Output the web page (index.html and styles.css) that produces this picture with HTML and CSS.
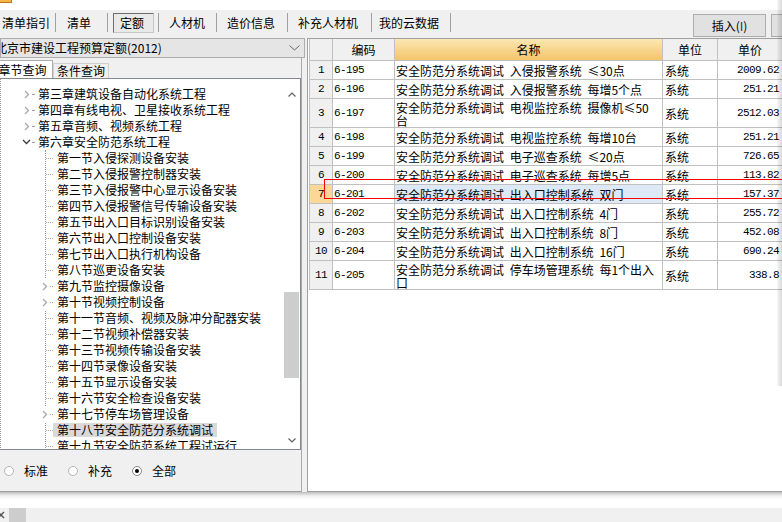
FILE: index.html
```html
<!DOCTYPE html>
<html lang="zh-CN">
<head>
<meta charset="utf-8">
<title>定额</title>
<link rel="stylesheet" href="styles.css">
</head>
<body>
<div class="app">
  <div class="titlestrip"><span class="app-icon"></span></div>

  <div class="toolbar">
    <nav class="tabs">
      <span class="tab tab-guide">清单指引</span>
      <span class="tab tab-list">清单</span>
      <span class="tab tab-quota"><span class="pressed">定额</span></span>
      <span class="tab tab-mat">人材机</span>
      <span class="tab tab-price">造价信息</span>
      <span class="tab tab-extra">补充人材机</span>
      <span class="tab tab-cloud">我的云数据</span>
    </nav>
    <div class="actions">
      <button class="btn">插入(<span class="key">I</span>)</button>
      <button class="btn btn-cut" aria-label="替换"></button>
    </div>
  </div>

  <div class="main">
    <aside class="left">
      <div class="combo">
        <span class="combo-text">北京市建设工程预算定额(2012)</span>
        <svg class="combo-arrow" width="11" height="6" viewBox="0 0 11 6"><polyline points="0.5,0.5 5.5,5 10.5,0.5" fill="none" stroke="#6a6a6a" stroke-width="1"/></svg>
      </div>
      <div class="qtabs">
        <span class="qtab active">章节查询</span>
        <span class="qtab">条件查询</span>
      </div>
      <div class="treebox">
        <div class="tree">
          <div class="node chapter"><span class="exp"><svg width="6" height="9" viewBox="0 0 6 9"><polyline points="1,1 4.5,4.5 1,8" fill="none" stroke="#a8a8a8" stroke-width="1.3"/></svg></span><span class="stub"></span><span class="label">第三章建筑设备自动化系统工程</span></div>
          <div class="node chapter"><span class="exp"><svg width="6" height="9" viewBox="0 0 6 9"><polyline points="1,1 4.5,4.5 1,8" fill="none" stroke="#a8a8a8" stroke-width="1.3"/></svg></span><span class="stub"></span><span class="label">第四章有线电视、卫星接收系统工程</span></div>
          <div class="node chapter"><span class="exp"><svg width="6" height="9" viewBox="0 0 6 9"><polyline points="1,1 4.5,4.5 1,8" fill="none" stroke="#a8a8a8" stroke-width="1.3"/></svg></span><span class="stub"></span><span class="label">第五章音频、视频系统工程</span></div>
          <div class="node chapter"><span class="exp"><svg width="9" height="6" viewBox="0 0 9 6"><polyline points="1,1 4.5,4.5 8,1" fill="none" stroke="#3c3c3c" stroke-width="1.3"/></svg></span><span class="stub"></span><span class="label">第六章安全防范系统工程</span></div>
          <div class="children">
            <div class="node section"><span class="stub"></span><span class="label">第一节入侵探测设备安装</span></div>
            <div class="node section"><span class="stub"></span><span class="label">第二节入侵报警控制器安装</span></div>
            <div class="node section"><span class="stub"></span><span class="label">第三节入侵报警中心显示设备安装</span></div>
            <div class="node section"><span class="stub"></span><span class="label">第四节入侵报警信号传输设备安装</span></div>
            <div class="node section"><span class="stub"></span><span class="label">第五节出入口目标识别设备安装</span></div>
            <div class="node section"><span class="stub"></span><span class="label">第六节出入口控制设备安装</span></div>
            <div class="node section"><span class="stub"></span><span class="label">第七节出入口执行机构设备</span></div>
            <div class="node section"><span class="stub"></span><span class="label">第八节巡更设备安装</span></div>
            <div class="node section"><span class="exp"><svg width="6" height="9" viewBox="0 0 6 9"><polyline points="1,1 4.5,4.5 1,8" fill="none" stroke="#a8a8a8" stroke-width="1.3"/></svg></span><span class="stub"></span><span class="label">第九节监控摄像设备</span></div>
            <div class="node section"><span class="exp"><svg width="6" height="9" viewBox="0 0 6 9"><polyline points="1,1 4.5,4.5 1,8" fill="none" stroke="#a8a8a8" stroke-width="1.3"/></svg></span><span class="stub"></span><span class="label">第十节视频控制设备</span></div>
            <div class="node section"><span class="stub"></span><span class="label">第十一节音频、视频及脉冲分配器安装</span></div>
            <div class="node section"><span class="stub"></span><span class="label">第十二节视频补偿器安装</span></div>
            <div class="node section"><span class="stub"></span><span class="label">第十三节视频传输设备安装</span></div>
            <div class="node section"><span class="stub"></span><span class="label">第十四节录像设备安装</span></div>
            <div class="node section"><span class="stub"></span><span class="label">第十五节显示设备安装</span></div>
            <div class="node section"><span class="stub"></span><span class="label">第十六节安全检查设备安装</span></div>
            <div class="node section"><span class="exp"><svg width="6" height="9" viewBox="0 0 6 9"><polyline points="1,1 4.5,4.5 1,8" fill="none" stroke="#a8a8a8" stroke-width="1.3"/></svg></span><span class="stub"></span><span class="label">第十七节停车场管理设备</span></div>
            <div class="node section selected"><span class="stub"></span><span class="label">第十八节安全防范分系统调试</span></div>
            <div class="node section"><span class="stub"></span><span class="label">第十九节安全防范系统工程试运行</span></div>
          </div>
        </div>
        <div class="scrollbar">
          <div class="sb-btn"><svg width="8" height="5" viewBox="0 0 8 5"><polyline points="0.5,4.5 4,1 7.5,4.5" fill="none" stroke="#606060" stroke-width="1.2"/></svg></div>
          <div class="sb-track"><div class="sb-thumb"></div></div>
          <div class="sb-btn"><svg width="8" height="5" viewBox="0 0 8 5"><polyline points="0.5,0.5 4,4 7.5,0.5" fill="none" stroke="#606060" stroke-width="1.2"/></svg></div>
        </div>
      </div>
      <div class="filters">
        <span class="opt"><span class="dot"></span>标准</span>
        <span class="opt"><span class="dot"></span>补充</span>
        <span class="opt on"><span class="dot"></span>全部</span>
      </div>
    </aside>

    <section class="grid">
      <div class="sheet">
        <div class="row head">
          <div class="c num"></div>
          <div class="c code">编码</div>
          <div class="c name">名称</div>
          <div class="c unit">单位</div>
          <div class="c price">单价</div>
        </div>
        <div class="row"><div class="c num">1</div><div class="c code">6-195</div><div class="c name">安全防范分系统调试 入侵报警系统 ≤30点</div><div class="c unit">系统</div><div class="c price">2009.62</div></div>
        <div class="row"><div class="c num">2</div><div class="c code">6-196</div><div class="c name">安全防范分系统调试 入侵报警系统 每增5个点</div><div class="c unit">系统</div><div class="c price">251.21</div></div>
        <div class="row tall"><div class="c num">3</div><div class="c code">6-197</div><div class="c name">安全防范分系统调试 电视监控系统 摄像机≤50台</div><div class="c unit">系统</div><div class="c price">2512.03</div></div>
        <div class="row"><div class="c num">4</div><div class="c code">6-198</div><div class="c name">安全防范分系统调试 电视监控系统 每增10台</div><div class="c unit">系统</div><div class="c price">251.21</div></div>
        <div class="row"><div class="c num">5</div><div class="c code">6-199</div><div class="c name">安全防范分系统调试 电子巡查系统 ≤20点</div><div class="c unit">系统</div><div class="c price">726.65</div></div>
        <div class="row"><div class="c num">6</div><div class="c code">6-200</div><div class="c name">安全防范分系统调试 电子巡查系统 每增5点</div><div class="c unit">系统</div><div class="c price">113.82</div></div>
        <div class="row current"><div class="c num">7</div><div class="c code">6-201</div><div class="c name">安全防范分系统调试 出入口控制系统 双门</div><div class="c unit">系统</div><div class="c price">157.37</div></div>
        <div class="row"><div class="c num">8</div><div class="c code">6-202</div><div class="c name">安全防范分系统调试 出入口控制系统 4门</div><div class="c unit">系统</div><div class="c price">255.72</div></div>
        <div class="row"><div class="c num">9</div><div class="c code">6-203</div><div class="c name">安全防范分系统调试 出入口控制系统 8门</div><div class="c unit">系统</div><div class="c price">452.08</div></div>
        <div class="row"><div class="c num">10</div><div class="c code">6-204</div><div class="c name">安全防范分系统调试 出入口控制系统 16门</div><div class="c unit">系统</div><div class="c price">690.24</div></div>
        <div class="row tall"><div class="c num">11</div><div class="c code">6-205</div><div class="c name">安全防范分系统调试 停车场管理系统 每1个出入口</div><div class="c unit">系统</div><div class="c price">338.8</div></div>
      </div>
      <div class="mark"></div>
    </section>
  </div>

  <div class="divider"></div>

  <div class="statusbar">
    <svg class="close" width="6" height="8" viewBox="0 0 6 8"><path d="M-2 1 L4 7 M4 1 L-2 7" stroke="#555" stroke-width="1.4"/></svg>
    <span class="sb-box"></span>
  </div>

  <div class="edge-shadow"></div>
</div>
</body>
</html>
```

FILE: styles.css
```css
* { box-sizing: border-box; }

html, body { margin: 0; padding: 0; }

body {
  width: 782px;
  height: 522px;
  overflow: hidden;
  background: #fff;
  font-family: "Noto Sans CJK SC", "Noto Sans", sans-serif;
  font-size: 12px;
  color: #000;
}

.app {
  position: relative;
  width: 782px;
  height: 522px;
  overflow: hidden;
  display: flex;
  flex-direction: column;
}

/* top strip */
.titlestrip { height: 10px; flex: none; background: #fff; }
.app-icon {
  display: block;
  width: 12px;
  height: 3px;
  background: #f5b548;
  border-right: 1px solid #b87418;
  border-bottom: 1px solid #b87418;
}

/* toolbar with module tabs */
.toolbar {
  height: 28px;
  flex: none;
  display: flex;
  align-items: flex-start;
  background: #f0f0f0;
  overflow: hidden;
}
.tabs { display: flex; margin-top: 3px; flex: none; }
.tab {
  height: 19px;
  display: flex;
  align-items: center;
  line-height: 19px;
  white-space: nowrap;
  border-right: 1px solid #a0a0a0;
}
.tab-guide { padding: 0 5px 0 2px; }
.tab-list  { padding: 0 16px 0 11px; }
.tab-quota { padding: 0 4px 0 5px; }
.tab-mat   { padding: 0 11px 0 10px; }
.tab-price { padding: 0 12px 0 10px; }
.tab-extra { padding: 0 13px 0 10px; }
.tab-cloud { padding: 0 11px 0 7px; }
.pressed {
  display: block;
  height: 20px;
  line-height: 18px;
  padding: 0 9px 0 6px;
  border: 1px solid;
  border-color: #6e6e6e #c8c8c8 #c8c8c8 #6e6e6e;
  background: #e9e9e9;
}

.actions {
  margin-left: auto;
  margin-top: 4px;
  display: flex;
  gap: 5px;
}
.btn {
  width: 73px;
  height: 23px;
  padding: 0;
  border: 1px solid #adadad;
  background: #e1e1e1;
  font-family: inherit;
  font-size: 12px;
  color: #000;
  line-height: 21px;
}
.btn .key { color: #1b2f7a; }
.btn-cut { margin-right: -62px; }

/* main area */
.main {
  height: 454px;
  flex: none;
  display: flex;
  background: #f0f0f0;
}

.left {
  width: 302px;
  flex: none;
  display: flex;
  flex-direction: column;
  border-right: 1px solid #a9a9a9;
  border-bottom: 1px solid #a0a0a0;
  background: #f0f0f0;
}

.combo {
  height: 20px;
  flex: none;
  margin-right: -4px;
  display: flex;
  align-items: center;
  border: 1px solid #acacac;
  background: #e5e5e5;
  white-space: nowrap;
  overflow: hidden;
}
.combo-text { margin-left: -6px; line-height: 18px; }
.combo-arrow { margin-left: auto; margin-right: 4px; }

.qtabs {
  height: 20px;
  flex: none;
  display: flex;
  align-items: flex-end;
}
.qtab {
  height: 15px;
  line-height: 14px;
  padding: 0 3px;
  border: 1px solid #d0d0d0;
  border-bottom: none;
  background: #f0f0f0;
  white-space: nowrap;
}
.qtab.active {
  height: 18px;
  line-height: 17px;
  width: 61px;
  margin-left: -8px;
  text-align: center;
  border-color: #adadad;
  background: #fff;
}

.treebox {
  height: 372px;
  flex: none;
  display: flex;
  border: 1px solid #828790;
  border-left: 1px dotted #9a9a9a;
  background: #fff;
  overflow: hidden;
}
.tree {
  flex: 1;
  padding-top: 7px;
  overflow: hidden;
}
.node {
  display: flex;
  align-items: center;
  height: 16px;
  white-space: nowrap;
}
.label {
  padding: 0 4px;
  line-height: 14px;
}
.chapter { padding-left: 20px; }
.chapter .exp {
  width: 11px;
  height: 16px;
  display: flex;
  align-items: center;
  justify-content: center;
}
.chapter .stub { width: 2px; border-top: 1px dotted #a0a0a0; }

.children {
  margin-left: 44px;
  border-left: 1px dotted #9a9a9a;
}
.section { position: relative; }
.section .stub { width: 7px; border-top: 1px dotted #a0a0a0; }
.section .exp {
  position: absolute;
  left: -5px;
  top: 0;
  width: 8px;
  height: 16px;
  display: flex;
  align-items: center;
  justify-content: center;
  background: #fff;
}
.section.selected .label { background: #d9d9d9; }

.scrollbar {
  width: 17px;
  flex: none;
  margin-top: 7px;
  display: flex;
  flex-direction: column;
  background: #fff;
}
.sb-btn {
  height: 17px;
  flex: none;
  display: flex;
  align-items: center;
  justify-content: center;
}
.sb-track { flex: 1; padding-top: 189px; }
.sb-thumb { height: 86px; margin: 0 1px; background: #cdcdcd; }

.filters {
  height: 41px;
  flex: none;
  display: flex;
  align-items: center;
  padding-left: 4px;
}
.opt { display: flex; align-items: center; margin-right: 20px; }
.dot {
  width: 10px;
  height: 10px;
  margin-right: 10px;
  border: 1px solid #b4b4b4;
  border-radius: 50%;
  background: #fff;
  display: flex;
  align-items: center;
  justify-content: center;
}
.opt.on .dot { border-color: #8a8a8a; }
.opt.on .dot::after {
  content: "";
  width: 4px;
  height: 4px;
  border-radius: 50%;
  background: #000;
}

/* data grid */
.grid {
  flex: 1;
  margin-left: 5px;
  position: relative;
  background: #fff;
  border-top: 1px solid #a0a0a0;
  border-left: 1px solid #a0a0a0;
  border-bottom: 1px solid #a0a0a0;
  padding-left: 1px;
  overflow: hidden;
}
.sheet { border-left: 1px solid #c0c0c0; width: 475px; }
.row {
  display: grid;
  grid-template-columns: 23px 62px 268px 55px 65px;
  height: 19px;
}
.row.head { height: 22px; }
.row.tall { height: 29px; }
.c {
  display: flex;
  align-items: center;
  padding: 0 1px;
  border-right: 1px solid #c0c0c0;
  border-bottom: 1px solid #c0c0c0;
  overflow: hidden;
  white-space: nowrap;
}
.num {
  justify-content: center;
  background: #f0f0f0;
  font-family: "Liberation Mono", monospace;
  font-size: 11px;
  letter-spacing: -0.6px;
}
.code {
  font-family: "Liberation Mono", monospace;
  font-size: 11px;
  letter-spacing: -0.6px;
}
.name {
  padding-right: 4px;
  line-height: 13px;
  white-space: normal;
  word-spacing: 3px;
}
.row.tall .name { padding-top: 2px; }
.unit { padding-left: 2px; }
.price {
  justify-content: flex-end;
  padding-right: 3px;
  font-family: "Liberation Mono", monospace;
  font-size: 11px;
  letter-spacing: -0.6px;
}

.head .c {
  justify-content: center;
  background: #f0f0f0;
  font-family: "Noto Sans CJK SC", sans-serif;
  font-size: 12px;
  letter-spacing: 0;
  padding: 0;
}
.head .name { background: linear-gradient(#fde7b3, #f3c46a); }

.row.current .num { background: #fdd797; }
.row.current .name { background: #dde9f7; }

.mark {
  position: absolute;
  left: 16px;
  top: 140px;
  width: 480px;
  height: 20px;
  border: 1px solid #ff0000;
}

/* bottom */
.divider {
  height: 16px;
  flex: none;
  background: linear-gradient(#bdbdbd, #f2f2f2 4px, #fff 8px, #fff);
}
.statusbar {
  height: 14px;
  flex: none;
  display: flex;
  align-items: center;
  background: #f0f0f0;
}
.close { flex: none; }
.sb-box {
  width: 17px;
  height: 14px;
  margin-left: 3px;
  background: #cdcdcd;
}

.edge-shadow {
  position: absolute;
  top: 0;
  right: 0;
  width: 5px;
  height: 386px;
  background: linear-gradient(to right, rgba(0,0,0,0.03), rgba(0,0,0,0.15));
}
```
